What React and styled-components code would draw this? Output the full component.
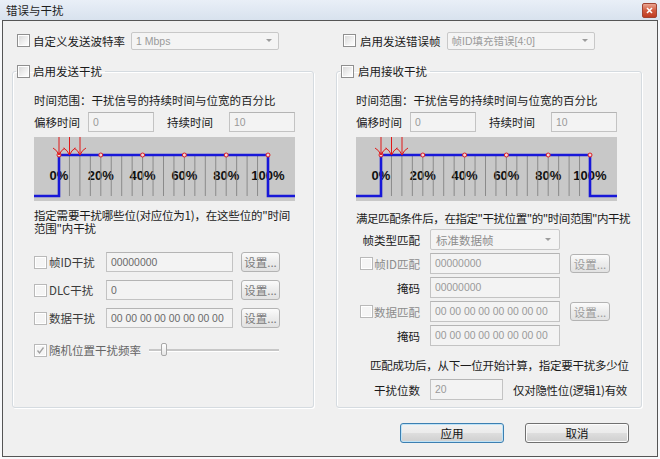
import React from "react";
import styled, { createGlobalStyle } from "styled-components";

const GlobalStyle = createGlobalStyle`
  html, body {
    margin: 0;
    padding: 0;
    background: #f8f9fb;
  }
  body {
    font-family: "Noto Sans CJK SC", "Liberation Sans", sans-serif;
    font-size: 11.5px;
    color: #1b1b1b;
  }
`;

const Window = styled.div`
  width: 660px;
  height: 459px;
  display: flex;
  flex-direction: column;
  overflow: hidden;
`;

const TitleBar = styled.div`
  height: 20px;
  flex: none;
  display: flex;
  align-items: center;
  justify-content: space-between;
  padding: 0 3px 0 6px;
  background: linear-gradient(to bottom, #e9eff7, #d8e2ee);
`;

const Title = styled.span`
  font-size: 11.5px;
  line-height: 20px;
  color: #1e1e1e;
`;

const CloseButton = styled.div`
  width: 15px;
  height: 15px;
  box-sizing: border-box;
  border: 1px solid #a14433;
  border-radius: 2px;
  background: linear-gradient(to bottom, #eaa592, #d05a3f 50%, #bf3c22);
  display: flex;
  align-items: center;
  justify-content: center;
`;

const Client = styled.div`
  flex: 1;
  margin: 0 2px 2px 2px;
  border: 1px solid #555;
  background: #f0f0f0;
  display: grid;
  grid-template-columns: 302px 306px;
  grid-template-rows: 19px auto auto;
  column-gap: 22px;
  align-content: start;
  padding: 10px 0 0 9px;
`;

const TopRow = styled.div`
  display: flex;
  align-items: center;
  padding-left: ${(p) => p.$indent}px;
`;

const CheckLabel = styled.label`
  display: flex;
  align-items: center;
  gap: ${(p) => p.$gap ?? 3}px;
  color: ${(p) => p.$tone ?? "#1b1b1b"};
  white-space: nowrap;
`;

const Box = styled.span`
  width: 13px;
  height: 13px;
  flex: none;
  box-sizing: border-box;
  border: 1px solid ${(p) => (p.$disabled ? "#b9b9b9" : "#8f8f8f")};
  background: ${(p) =>
    p.$disabled
      ? "#f5f5f5"
      : "linear-gradient(135deg, #d6d6d6, #f6f6f6 70%, #ffffff)"};
  box-shadow: inset 0 0 0 1px #fff;
  display: flex;
  align-items: center;
  justify-content: center;
`;

const Combo = styled.div`
  margin-left: 6px;
  width: ${(p) => p.$w}px;
  height: ${(p) => p.$h ?? 18}px;
  box-sizing: border-box;
  border: 1px solid #c8c8c8;
  border-radius: 2px;
  background: #f4f4f4;
  display: flex;
  align-items: center;
  justify-content: space-between;
  padding: 0 6px 0 4px;
  color: #9a9a9a;
  font-size: 11px;
`;

const ComboText = styled.span`
  font-family: "Liberation Sans", "Noto Sans CJK SC", sans-serif;
  font-size: 10.5px;
`;

const Arrow = styled.span`
  width: 0;
  height: 0;
  border-left: 3px solid transparent;
  border-right: 3px solid transparent;
  border-top: 3px solid #9c9c9c;
`;

const Group = styled.fieldset`
  margin: 13px 0 0 0;
  padding: 0;
  height: 345px;
  box-sizing: border-box;
  min-width: 0;
  border: 1px solid #d5dbe0;
  border-radius: 3px;
  box-shadow: 1px 1px 0 #fff, inset 1px 1px 0 #fff;
`;

const Legend = styled.legend`
  margin-left: 3px;
  padding: 0 3px 0 1px;
  height: 16px;
  display: flex;
  align-items: center;
`;

const GroupBody = styled.div`
  display: flex;
  flex-direction: column;
  padding-left: ${(p) => p.$indent}px;
`;

const Caption = styled.div`
  margin-top: ${(p) => p.$top}px;
  padding-left: ${(p) => p.$indent ?? 0}px;
  letter-spacing: ${(p) => p.$tight ?? 0}px;
  line-height: 16px;
  height: 16px;
  white-space: nowrap;
`;

const Note = styled.div`
  margin-top: ${(p) => p.$top}px;
  width: 262px;
  line-height: 13px;
  letter-spacing: -0.2px;
`;

const ParamRow = styled.div`
  margin-top: 4px;
  display: grid;
  grid-template-columns: 54px 66px 13px 62px 66px;
  align-items: center;
  height: 20px;
`;

const Edit = styled.div`
  height: ${(p) => p.$h ?? 20}px;
  box-sizing: border-box;
  border: 1px solid #c3c3c3;
  border-top-color: #b4b4b4;
  background: #f3f3f3;
  display: flex;
  align-items: center;
  padding-left: 4px;
  font-family: "Liberation Sans", sans-serif;
  font-size: 10.4px;
  color: ${(p) => (p.$light ? "#9a9a9a" : "#6a6a6a")};
  white-space: nowrap;
  overflow: hidden;
`;

const ChartBox = styled.div`
  margin-top: 5px;
  width: 261px;
  height: 64px;
  line-height: 0;
`;

const FieldRows = styled.div`
  margin-top: 17px;
  display: grid;
  grid-template-columns: 64px 127px 39px;
  grid-auto-rows: 20px;
  column-gap: 8px;
  row-gap: 8px;
  align-items: center;
`;

const SetButton = styled.div`
  height: ${(p) => p.$h ?? 20}px;
  box-sizing: border-box;
  border: 1px solid #b3b3b3;
  border-radius: 3px;
  background: linear-gradient(to bottom, #fbfbfb, #ececec 50%, #e2e2e2);
  display: flex;
  align-items: center;
  justify-content: center;
  color: ${(p) => (p.$dim ? "#9c9c9c" : "#7a7a7a")};
  font-size: 11.5px;
  white-space: nowrap;
`;

const RandomRow = styled.div`
  margin-top: 12px;
  height: 20px;
  display: flex;
  align-items: center;
  gap: 8px;
`;

const SliderTrack = styled.div`
  position: relative;
  width: 130px;
  height: 2px;
  background: #c7c7c7;
  border-bottom: 1px solid #fff;
`;

const SliderThumb = styled.div`
  position: absolute;
  left: 12px;
  top: -6px;
  width: 6px;
  height: 13px;
  box-sizing: border-box;
  border: 1px solid #a8a8a8;
  border-radius: 2px;
  background: linear-gradient(to bottom, #ffffff, #e6e6e6);
`;

const MatchGrid = styled.div`
  margin-top: ${(p) => p.$top}px;
  display: grid;
  grid-template-columns: ${(p) => p.$cols};
  grid-auto-rows: 21px;
  column-gap: 10px;
  row-gap: 3px;
  align-items: center;
`;

const RightLabel = styled.div`
  display: flex;
  justify-content: flex-end;
  align-items: center;
  gap: 1px;
  white-space: nowrap;
  color: ${(p) => (p.$dim ? "#8c8c8c" : "#1b1b1b")};
`;

const ComboField = styled.div`
  height: 21px;
  box-sizing: border-box;
  border: 1px solid #c8c8c8;
  border-radius: 2px;
  background: #f4f4f4;
  display: flex;
  align-items: center;
  justify-content: space-between;
  padding: 0 8px 0 5px;
  color: #8c8c8c;
`;

const Plain = styled.span`
  white-space: nowrap;
  letter-spacing: ${(p) => p.$tight ?? 0}px;
`;

const ButtonRow = styled.div`
  grid-column: 1 / -1;
  display: flex;
  justify-content: flex-end;
  gap: 21px;
  margin-top: 15px;
  padding-right: 13px;
  width: 630px;
  box-sizing: border-box;
`;

const DialogButton = styled.div`
  width: 104px;
  height: 20px;
  box-sizing: border-box;
  border: 1px solid ${(p) => (p.$focus ? "#3c7fb1" : "#707070")};
  border-radius: 3px;
  background: linear-gradient(to bottom, #f2f2f2, #ebebeb 48%, #dddddd 52%, #cfcfcf);
  box-shadow: inset 0 0 0 1px ${(p) => (p.$focus ? "#bfe3f7" : "#fcfcfc")};
  display: flex;
  align-items: center;
  justify-content: center;
  color: #111;
`;

function Check({ disabled, checked }) {
  return (
    <Box $disabled={disabled}>
      {checked && (
        <svg width="9" height="9" viewBox="0 0 9 9">
          <polyline
            points="1.5,4.5 3.5,7 7.5,1.5"
            fill="none"
            stroke="#a0a0a0"
            strokeWidth="1.3"
          />
        </svg>
      )}
    </Box>
  );
}

function Timeline() {
  const w = 261;
  const h = 64;
  const x0 = 25;
  const span = 209;
  const hi = 18;
  const lo = 59;
  const ticks = Array.from({ length: 21 }, (_, i) => x0 + (i * span) / 20);
  const marks = Array.from({ length: 6 }, (_, i) => x0 + (i * span) / 5);
  const arrows = [x0, x0 + 10.5, x0 + 21];

  return (
    <ChartBox>
      <svg width={w} height={h} viewBox={`0 0 ${w} ${h}`}>
        <rect width={w} height={h} fill="#c8c8c8" />
        {marks.map((x, i) => (
          <text
            key={"t" + i}
            x={x}
            y={43}
            textAnchor="middle"
            fontFamily="Liberation Sans, Arial, sans-serif"
            fontWeight="bold"
            fontSize="13"
            fill="#111"
          >
            {i * 20}%
          </text>
        ))}
        {ticks.map((x, i) => (
          <line
            key={"k" + i}
            x1={x}
            x2={x}
            y1={hi}
            y2={lo}
            stroke="#8a8a8a"
            strokeWidth="1"
          />
        ))}
        <polyline
          points={`0,${lo} ${x0},${lo} ${x0},${hi} ${x0 + span},${hi} ${x0 + span},${lo} ${w},${lo}`}
          fill="none"
          stroke="#1818d8"
          strokeWidth="2.6"
        />
        {marks.map((x, i) => (
          <circle
            key={"c" + i}
            cx={x}
            cy={hi}
            r="2"
            fill="#f2d6d6"
            stroke="#e02020"
            strokeWidth="1"
          />
        ))}
        {arrows.map((x, i) => (
          <path
            key={"a" + i}
            d={`M${x} 0 V${hi} M${x - 6} ${hi - 7} Q${x - 2} ${hi - 5} ${x} ${hi} Q${x + 2} ${hi - 5} ${x + 6} ${hi - 7}`}
            fill="none"
            stroke="#e01818"
            strokeWidth="1"
          />
        ))}
      </svg>
    </ChartBox>
  );
}

function Params() {
  return (
    <ParamRow>
      <Plain>偏移时间</Plain>
      <Edit $light>0</Edit>
      <span />
      <Plain>持续时间</Plain>
      <Edit $light>10</Edit>
    </ParamRow>
  );
}

export default function App() {
  return (
    <>
      <GlobalStyle />
      <Window>
        <TitleBar>
          <Title>错误与干扰</Title>
          <CloseButton>
            <svg width="7" height="7" viewBox="0 0 7 7">
              <path d="M1 1 L6 6 M6 1 L1 6" stroke="#fff" strokeWidth="1.6" />
            </svg>
          </CloseButton>
        </TitleBar>

        <Client>
          <TopRow $indent={5}>
            <CheckLabel>
              <Check />
              自定义发送波特率
            </CheckLabel>
            <Combo $w={148}>
              <ComboText>1 Mbps</ComboText>
              <Arrow />
            </Combo>
          </TopRow>

          <TopRow $indent={7}>
            <CheckLabel $gap={4}>
              <Check />
              启用发送错误帧
            </CheckLabel>
            <Combo $w={148}>
              <ComboText>帧ID填充错误[4:0]</ComboText>
              <Arrow />
            </Combo>
          </TopRow>

          <Group>
            <Legend>
              <CheckLabel>
                <Check />
                启用发送干扰
              </CheckLabel>
            </Legend>
            <GroupBody $indent={21}>
              <Caption $top={13}>时间范围：干扰信号的持续时间与位宽的百分比</Caption>
              <Params />
              <Timeline />
              <Note $top={8}>
                指定需要干扰哪些位(对应位为1)，在这些位的"时间范围"内干扰
              </Note>
              <FieldRows>
                <CheckLabel $gap={2} $tone="#3c3c3c">
                  <Check disabled />
                  帧ID干扰
                </CheckLabel>
                <Edit>00000000</Edit>
                <SetButton>设置...</SetButton>

                <CheckLabel $gap={2} $tone="#3c3c3c">
                  <Check disabled />
                  DLC干扰
                </CheckLabel>
                <Edit>0</Edit>
                <SetButton>设置...</SetButton>

                <CheckLabel $gap={2} $tone="#3c3c3c">
                  <Check disabled />
                  数据干扰
                </CheckLabel>
                <Edit>00 00 00 00 00 00 00 00</Edit>
                <SetButton>设置...</SetButton>
              </FieldRows>
              <RandomRow>
                <CheckLabel $gap={2} $tone="#666">
                  <Check disabled checked />
                  随机位置干扰频率
                </CheckLabel>
                <SliderTrack>
                  <SliderThumb />
                </SliderTrack>
              </RandomRow>
            </GroupBody>
          </Group>

          <Group>
            <Legend>
              <CheckLabel $gap={4}>
                <Check />
                启用接收干扰
              </CheckLabel>
            </Legend>
            <GroupBody $indent={19}>
              <Caption $top={13}>时间范围：干扰信号的持续时间与位宽的百分比</Caption>
              <Params />
              <Timeline />
              <Caption $top={9} $tight={-0.45}>
                满足匹配条件后，在指定"干扰位置"的"时间范围"内干扰
              </Caption>
              <MatchGrid $top={3} $cols="64px 130px 40px">
                <RightLabel>帧类型匹配</RightLabel>
                <ComboField>
                  <span>标准数据帧</span>
                  <Arrow />
                </ComboField>
                <span />

                <RightLabel $dim>
                  <Check disabled />
                  帧ID匹配
                </RightLabel>
                <Edit $h={21} $light>00000000</Edit>
                <SetButton $h={19} $dim>设置...</SetButton>

                <RightLabel>掩码</RightLabel>
                <Edit $h={21} $light>00000000</Edit>
                <span />

                <RightLabel $dim>
                  <Check disabled />
                  数据匹配
                </RightLabel>
                <Edit $h={21} $light>00 00 00 00 00 00 00 00</Edit>
                <SetButton $h={19} $dim>设置...</SetButton>

                <RightLabel>掩码</RightLabel>
                <Edit $h={21} $light>00 00 00 00 00 00 00 00</Edit>
                <span />
              </MatchGrid>
              <Caption $top={11} $indent={14} $tight={-0.25}>
                匹配成功后，从下一位开始计算，指定要干扰多少位
              </Caption>
              <MatchGrid $top={6} $cols="64px 73px auto">
                <RightLabel>干扰位数</RightLabel>
                <Edit $h={21} $light>20</Edit>
                <Plain $tight={-0.3}>仅对隐性位(逻辑1)有效</Plain>
              </MatchGrid>
            </GroupBody>
          </Group>

          <ButtonRow>
            <DialogButton $focus>应用</DialogButton>
            <DialogButton>取消</DialogButton>
          </ButtonRow>
        </Client>
      </Window>
    </>
  );
}
